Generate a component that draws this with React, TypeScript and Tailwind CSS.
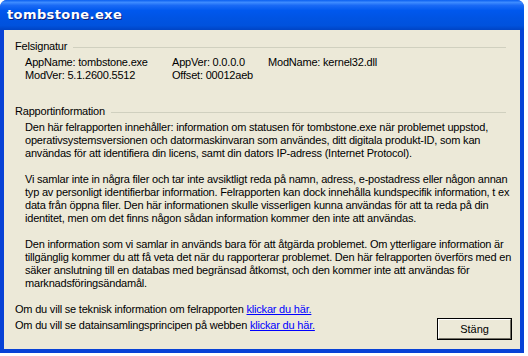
import React from "react";

const font = { fontFamily: '"Liberation Sans", Arial, sans-serif' };

function Group({ title, children }: { title: string; children: React.ReactNode }) {
  return (
    <div>
      <div className="flex items-center gap-[6px] h-[13px]">
        <span className="leading-[13px]">{title}</span>
        <div className="flex-1 h-px bg-[#D0D0BF] mt-[2px]" />
      </div>
      {children}
    </div>
  );
}

export default function App() {
  return (
    <div className="w-[528px] h-[356px] bg-white relative overflow-hidden" style={font}>
      <div className="w-[524px] h-[353px] flex flex-col rounded-t-[7px] bg-[#0842D6] overflow-hidden">
        <div
          className="h-[30px] shrink-0 flex items-center pl-[7px] pb-[1px]"
          style={{
            background:
              "linear-gradient(to bottom, #0A5FF0 0%, #3E8CFF 8%, #1A6AF5 18%, #0058EE 35%, #0054E3 60%, #0052DD 85%, #0044C4 100%)",
          }}
        >
          <span
            className="text-white font-bold text-[13px] tracking-[0.4px]"
            style={{ fontFamily: '"DejaVu Sans", "Liberation Sans", sans-serif', textShadow: "1px 1px 0 #0A1E7A" }}
          >
            tombstone.exe
          </span>
        </div>
        <div className="flex-1 mx-[4px] mb-[4px] bg-[#ECE9D8] text-[11px] tracking-[-0.2px] text-black relative">
          <div className="pl-[11px] pr-[14px] pt-[10px]">
            <Group title="Felsignatur">
              <div className="pl-[10px] pt-[3px] leading-[13px] grid grid-cols-[147px_96px_auto]">
                <span>AppName: tombstone.exe</span>
                <span>AppVer: 0.0.0.0</span>
                <span>ModName: kernel32.dll</span>
                <span>ModVer: 5.1.2600.5512</span>
                <span>Offset: 00012aeb</span>
                <span></span>
              </div>
            </Group>
            <div className="h-[23px]" />
            <Group title="Rapportinformation">
              <div className="pl-[10px] pt-[3px] leading-[13px] whitespace-nowrap">
                <p>
                  Den här felrapporten innehåller: information om statusen för tombstone.exe när problemet uppstod,
                  <br />
                  operativsystemsversionen och datormaskinvaran som användes, ditt digitala produkt-ID, som kan
                  <br />
                  användas för att identifiera din licens, samt din dators IP-adress (Internet Protocol).
                </p>
                <p className="mt-[13px]">
                  Vi samlar inte in några filer och tar inte avsiktligt reda på namn, adress, e-postadress eller någon annan
                  <br />
                  typ av personligt identifierbar information. Felrapporten kan dock innehålla kundspecifik information, t ex
                  <br />
                  data från öppna filer. Den här informationen skulle visserligen kunna användas för att ta reda på din
                  <br />
                  identitet, men om det finns någon sådan information kommer den inte att användas.
                </p>
                <p className="mt-[13px]">
                  Den information som vi samlar in används bara för att åtgärda problemet. Om ytterligare information är
                  <br />
                  tillgänglig kommer du att få veta det när du rapporterar problemet. Den här felrapporten överförs med en
                  <br />
                  säker anslutning till en databas med begränsad åtkomst, och den kommer inte att användas för
                  <br />
                  marknadsföringsändamål.
                </p>
              </div>
            </Group>
            <div className="mt-[13px] leading-[13px] whitespace-nowrap">
              <div>
                Om du vill se teknisk information om felrapporten{" "}
                <span className="text-[#0000FF] underline">klickar du här.</span>
              </div>
              <div className="mt-[3px]">
                Om du vill se datainsamlingsprincipen på webben{" "}
                <span className="text-[#0000FF] underline">klickar du här.</span>
              </div>
            </div>
          </div>
          <div className="absolute left-[433px] top-[288px] w-[75px] h-[22px] border border-black bg-[#ECE9D8] tracking-normal">
            <div className="w-full h-full border-t border-l border-t-white border-l-white border-b border-r border-b-[#716F64] border-r-[#716F64] flex items-center justify-center">
              Stäng
            </div>
          </div>
        </div>
      </div>
    </div>
  );
}
